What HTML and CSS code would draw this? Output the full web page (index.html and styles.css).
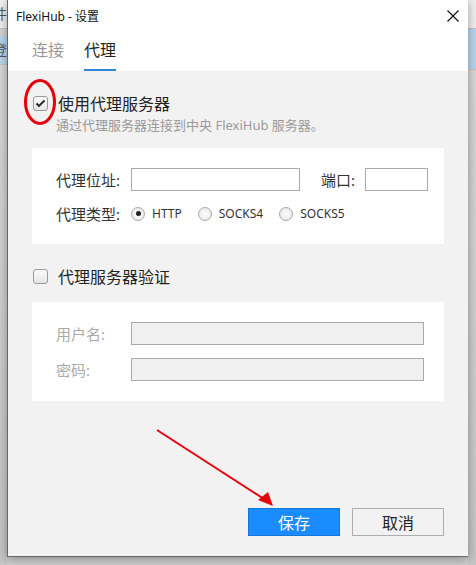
FILE: index.html
```html
<!DOCTYPE html>
<html lang="zh-CN">
<head>
    <meta charset="UTF-8">
    <title>FlexiHub - 设置</title>
    <link rel="stylesheet" href="styles.css">
</head>
<body>
    <!-- Main app behind the dialog -->
    <div class="app-strip app-left">
        <div class="app-row">件</div>
        <div class="app-row selected">登</div>
        <div class="app-rest"></div>
    </div>

    <!-- Settings dialog -->
    <div class="window">
        <div class="titlebar">
            <span class="title">FlexiHub - 设置</span>
            <svg class="close" width="12" height="12" viewBox="0 0 12 12">
                <path d="M0.5 0.5 L11.5 11.5 M11.5 0.5 L0.5 11.5" stroke="#111" stroke-width="1.2"/>
            </svg>
        </div>

        <div class="tabs">
            <span class="tab">连接</span>
            <span class="tab active">代理</span>
        </div>

        <div class="content">
            <label class="check-row">
                <span class="checkbox checked">
                    <svg width="11" height="9" viewBox="0 0 11 9"><path d="M1.5 4.5 L4 7 L9.5 1.5" fill="none" stroke="#222" stroke-width="1.8"/></svg>
                </span>
                <span class="check-label">使用代理服务器</span>
            </label>
            <div class="hint">通过代理服务器连接到中央 FlexiHub 服务器。</div>

            <div class="panel proxy">
                <div class="field-row">
                    <span class="field-label">代理位址:</span>
                    <span class="input addr"></span>
                    <span class="field-label port-label">端口:</span>
                    <span class="input port"></span>
                </div>
                <div class="field-row">
                    <span class="field-label">代理类型:</span>
                    <span class="radio on"></span><span class="radio-label">HTTP</span>
                    <span class="radio"></span><span class="radio-label">SOCKS4</span>
                    <span class="radio"></span><span class="radio-label">SOCKS5</span>
                </div>
            </div>

            <label class="check-row auth">
                <span class="checkbox"></span>
                <span class="check-label">代理服务器验证</span>
            </label>

            <div class="panel login">
                <div class="field-row">
                    <span class="field-label muted">用户名:</span>
                    <span class="input wide disabled"></span>
                </div>
                <div class="field-row">
                    <span class="field-label muted">密码:</span>
                    <span class="input wide disabled"></span>
                </div>
            </div>

            <div class="buttons">
                <button class="btn primary">保存</button>
                <button class="btn">取消</button>
            </div>
        </div>

        <!-- red markup drawn on top -->
        <svg class="markup" width="460" height="557" viewBox="0 0 460 557">
            <ellipse cx="32" cy="102" rx="14.5" ry="21.5" fill="none" stroke="#e8000b" stroke-width="3"/>
            <line x1="149" y1="430" x2="256" y2="499" stroke="#e8000b" stroke-width="2"/>
            <polygon points="265,506 250,500 260,492" fill="#e8000b"/>
        </svg>
    </div>

    <div class="app-strip app-right">
        <div class="app-row"></div>
        <div class="app-row selected"></div>
        <div class="app-rest"></div>
    </div>
</body>
</html>
```

FILE: styles.css
```css
body {
    margin: 0;
    width: 476px;
    height: 565px;
    display: flex;
    overflow: hidden;
    background-color: #cfcfcf;
    font-family: "Noto Sans", "Noto Sans CJK SC", sans-serif;
    color: #333;
}

/* App behind the dialog */
.app-strip {
    display: flex;
    flex-direction: column;
    overflow: hidden;
    background-color: #d4d4d4;
}
.app-left {
    width: 7px;
    font-size: 14px;
    color: #555;
}
.app-right {
    width: 8px;
}
.app-row {
    height: 28px;
    line-height: 28px;
    background-color: #f0f0f0;
    border-bottom: 1px solid #c4c4c4;
    text-indent: -7px;
    white-space: nowrap;
}
.app-row.selected {
    margin-top: 7px;
    background-color: #b9d6ee;
}
.app-right .app-row.selected {
    margin-top: 0;
    height: 40px;
}
.app-rest {
    flex: 1;
    background: linear-gradient(#d8d8d8, #c6c6c6);
}

/* Dialog */
.window {
    position: relative;
    z-index: 1;
    width: 460px;
    height: 556px;
    border-left: 1px solid #666;
    border-bottom: 1px solid #666;
    background-color: #f2f2f2;
    display: flex;
    flex-direction: column;
    box-shadow: 0 2px 10px rgba(0, 0, 0, 0.35);
}
.titlebar {
    height: 31px;
    background-color: #fff;
    display: flex;
    align-items: center;
    justify-content: space-between;
    padding: 0 9px 0 8px;
}
.title {
    font-size: 12px;
    color: #111;
}
.tabs {
    height: 40px;
    background-color: #fff;
    display: flex;
    gap: 20px;
    padding-left: 24px;
}
.tab {
    font-size: 16px;
    line-height: 38px;
    color: #999;
    border-bottom: 2px solid transparent;
}
.tab.active {
    color: #222;
    border-bottom-color: #2b89d6;
}

.content {
    flex: 1;
    display: flex;
    flex-direction: column;
    padding: 0 24px 20px 24px;
}
.check-row {
    display: flex;
    align-items: center;
    gap: 10px;
    margin-top: 20px;
    padding-left: 1px;
}
.check-row.auth {
    margin-top: 20px;
    margin-bottom: 14px;
}
.checkbox {
    width: 13px;
    height: 13px;
    border: 1px solid #999;
    border-radius: 3px;
    background: linear-gradient(#fafafa, #e6e6e6);
    display: flex;
    align-items: center;
    justify-content: center;
}
.check-label {
    font-size: 16px;
    color: #222;
}
.hint {
    font-size: 13px;
    color: #999;
    padding-left: 24px;
    margin-bottom: 14px;
}

.panel {
    background-color: #fff;
    padding: 20px 16px 19px 24px;
    display: flex;
    flex-direction: column;
    gap: 11px;
}
.panel.login {
    gap: 13px;
    padding-bottom: 20px;
}
.field-row {
    display: flex;
    align-items: center;
    height: 23px;
}
.field-label {
    font-size: 15px;
    color: #333;
    width: 75px;
    flex-shrink: 0;
}
.field-label.muted {
    color: #aaa;
}
.field-label.port-label {
    width: 44px;
    margin-left: 21px;
}
.input {
    height: 21px;
    border: 1px solid #aaa;
    background-color: #fff;
    flex-shrink: 0;
}
.input.addr {
    width: 167px;
}
.input.port {
    width: 61px;
}
.input.wide {
    flex: 1;
    margin-right: 4px;
}
.input.disabled {
    background-color: #f0f0f0;
}

.radio {
    width: 12px;
    height: 12px;
    border: 1px solid #aaa;
    border-radius: 50%;
    background: radial-gradient(#fdfdfd, #e4e4e4);
    display: flex;
    align-items: center;
    justify-content: center;
}
.radio.on::after {
    content: "";
    width: 5px;
    height: 5px;
    border-radius: 50%;
    background-color: #222;
}
.radio-label {
    font-size: 12px;
    color: #333;
    margin-left: 7px;
    margin-right: 16px;
}

.buttons {
    margin-top: auto;
    display: flex;
    justify-content: flex-end;
    gap: 12px;
}
.btn {
    width: 92px;
    height: 28px;
    font-family: inherit;
    font-size: 16px;
    color: #222;
    background-color: #f2f2f2;
    border: 1px solid #adadad;
    padding: 0;
}
.btn.primary {
    background-color: #1a8cff;
    border-color: #1776d6;
    color: #fff;
}

.markup {
    position: absolute;
    left: 0;
    top: 0;
    pointer-events: none;
}
```
